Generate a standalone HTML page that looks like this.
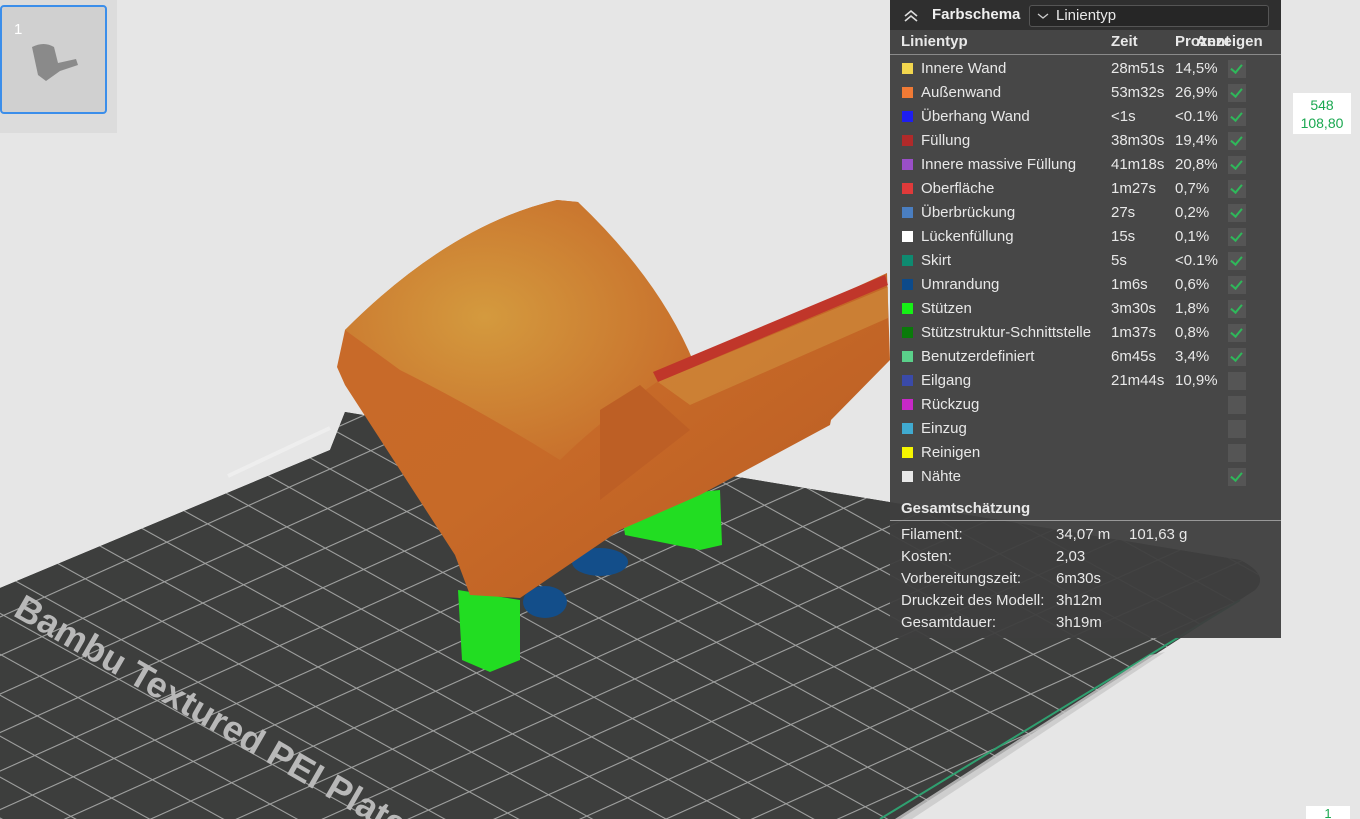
<!DOCTYPE html>
<html><head><meta charset="utf-8"><style>
*{margin:0;padding:0;box-sizing:border-box}
html,body{width:1360px;height:819px;overflow:hidden}
body{background:#e6e6e6;font-family:"Liberation Sans","Noto Sans CJK SC",sans-serif;position:relative}
svg.scene{position:absolute;left:0;top:0}
.thumbs{position:absolute;left:0;top:0;width:117px;height:133px;background:#dcdcdc}
.card{position:absolute;left:0;top:5px;width:107px;height:109px;border:2px solid #3b8eea;border-radius:4px;background:#d0d0d0}
.card span{position:absolute;left:12px;top:14px;color:#fff;font-size:15px}
.panel{position:absolute;left:890px;top:0;width:391px;height:638px;background:rgba(62,62,62,.95);color:#e8e8e8;font-size:15px;overflow:hidden}
.hdr{height:30px;background:#2f2f2f;position:relative}
.hdr b{position:absolute;left:42px;top:6px;font-size:15px;color:#f0f0f0}
.sel{position:absolute;left:139px;top:5px;width:240px;height:22px;border:1px solid #555;border-radius:3px;background:#262626;font-size:15px;padding-left:26px;line-height:20px}
.colh{height:25px;position:relative;border-bottom:1px solid #8a8a8a;font-weight:bold;background:#454545}
.colh span,.row span{position:absolute;top:3px}
.row{height:24px;position:relative}
.sw{position:absolute;left:12px;top:6px;width:11px;height:11px}
.chk{position:absolute;left:338px;top:3px;width:18px;height:18px;background:#555}
.chk.on::after{content:"";position:absolute;left:5px;top:2px;width:5px;height:9px;border:solid #2fb85a;border-width:0 2.5px 2.5px 0;transform:rotate(40deg)}
.est{position:absolute;left:0;top:498px;width:391px}
.est .t{font-weight:bold;padding-left:11px;height:23px;line-height:22px;border-bottom:1px solid #999}
.est .r{height:22px;position:relative}
.est .r span{position:absolute;top:3px}
</style></head><body>
<svg class="scene" width="1360" height="819">
<defs>
<pattern id="g" width="30" height="30" patternUnits="userSpaceOnUse" patternTransform="matrix(1.36,-0.61,1.28,0.71,0,0)">
<rect width="30" height="30" fill="#3d3e3d"/>
<path d="M0 0H30M0 0V30" stroke="#a0a1a0" stroke-width="1.8"/>
</pattern>
<clipPath id="pc"><path d="M345 412 L1240 560 Q1270 575 1255 590 L900 819 L0 819 L0 588 L330 450 Z"/></clipPath>
<linearGradient id="or" x1="0" y1="0" x2="1" y2="1"><stop offset="0" stop-color="#c96a2a"/><stop offset=".5" stop-color="#c76a28"/><stop offset="1" stop-color="#b85a22"/></linearGradient>
<radialGradient id="top" cx=".4" cy=".45" r=".6"><stop offset="0" stop-color="#d49a3e"/><stop offset="1" stop-color="#c8702c"/></radialGradient>
</defs>
<path d="M345 412 L1240 560 Q1270 575 1255 590 L900 819 L0 819 L0 588 L330 450 Z" fill="#2c2d2c"/>
<rect x="0" y="400" width="1300" height="419" fill="url(#g)" clip-path="url(#pc)"/>
<line x1="330" y1="428" x2="228" y2="476" stroke="#eee" stroke-width="4"/>
<text x="12" y="615" fill="#b8b8b8" font-size="36" transform="rotate(30 12 615)" font-family="Liberation Sans" font-weight="bold">Bambu Textured PEI Plate</text>
<line x1="1240" y1="600" x2="880" y2="819" stroke="#2fa070" stroke-width="2"/>
<polygon points="1150,655 1165,652 912,819 895,819" fill="#c8c8c8" opacity=".8"/>
<polygon points="458,590 520,600 520,660 490,672 462,660" fill="#22dd22"/>
<polygon points="620,500 720,490 722,545 700,550 650,540 625,535" fill="#22dd22"/>
<ellipse cx="545" cy="602" rx="22" ry="16" fill="#134e8a"/>
<ellipse cx="600" cy="562" rx="28" ry="14" fill="#134e8a"/>
<path d="M337 367 L345 330 Q450 225 557 200 L578 202 Q640 290 694 363 L653 380 L887 273 L890 360 L831 420 L830 425 L700 495 L620 530 L520 598 L470 595 L455 555 L345 385 Z" fill="url(#or)"/>
<path d="M345 330 Q450 225 557 200 L578 202 Q660 280 694 363 L660 380 Q600 420 560 460 Q480 410 400 370 Z" fill="url(#top)"/>
<path d="M653 372 L885 275 L888 285 L658 382 Z" fill="#c0362a"/>
<path d="M658 382 L888 287 L888 318 L690 405 Z" fill="#cf8a3a" opacity=".7"/>
<path d="M600 410 L640 385 L690 430 L600 500 Z" fill="#bd5f25"/>
</svg>
<div class="thumbs"><div class="card"><span>1</span>
<svg width="60" height="50" style="position:absolute;left:22px;top:30px"><path d="M8 10 Q20 4 30 10 L34 26 L52 22 L54 28 L36 34 L22 44 L14 38 Z" fill="#8a8a8a"/></svg></div></div>
<div class="panel">
<div class="hdr"><svg width="20" height="16" style="position:absolute;left:12px;top:7px"><path d="M3 9l6-5 6 5M3 14l6-5 6 5" fill="none" stroke="#ddd" stroke-width="1.6"/></svg><b>Farbschema</b><div class="sel"><svg width="14" height="8" style="position:absolute;left:7px;top:7px"><path d="M1 1l5 4 5-4" fill="none" stroke="#ccc" stroke-width="1.3"/></svg>Linientyp</div></div>
<div class="colh"><span style="left:11px">Linientyp</span><span style="left:221px">Zeit</span><span style="left:285px">Prozent</span><span style="left:306px">Anzeigen</span></div>
<div style="height:2px"></div>
<div id="rows"></div>
<div class="est"><div class="t">Gesamtschätzung</div><div style="height:2px"></div>
<div class="r"><span style="left:11px">Filament:</span><span style="left:166px">34,07 m</span><span style="left:239px">101,63 g</span></div>
<div class="r"><span style="left:11px">Kosten:</span><span style="left:166px">2,03</span></div>
<div class="r"><span style="left:11px">Vorbereitungszeit:</span><span style="left:166px">6m30s</span></div>
<div class="r"><span style="left:11px">Druckzeit des Modell:</span><span style="left:166px">3h12m</span></div>
<div class="r"><span style="left:11px">Gesamtdauer:</span><span style="left:166px">3h19m</span></div>
</div>
</div>
<div style="position:absolute;left:1293px;top:93px;width:58px;height:41px;background:#fff;color:#1aa850;font-size:14px;text-align:center;line-height:18px;padding-top:3px">548<br>108,80</div>
<div style="position:absolute;left:1306px;top:806px;width:44px;height:13px;background:#fff;color:#1aa850;font-size:13px;text-align:center;line-height:16px;overflow:hidden">1</div>
<script>
var d=[["#f2d64e","Innere Wand","28m51s","14,5%",1],["#f07a35","Außenwand","53m32s","26,9%",1],["#1e1ef0","Überhang Wand","<1s","<0.1%",1],["#b02a2a","Füllung","38m30s","19,4%",1],["#9a4fc8","Innere massive Füllung","41m18s","20,8%",1],["#e03a3a","Oberfläche","1m27s","0,7%",1],["#4a7ec0","Überbrückung","27s","0,2%",1],["#ffffff","Lückenfüllung","15s","0,1%",1],["#0e8a70","Skirt","5s","<0.1%",1],["#0c4a8a","Umrandung","1m6s","0,6%",1],["#16f016","Stützen","3m30s","1,8%",1],["#0a7a0a","Stützstruktur-Schnittstelle","1m37s","0,8%",1],["#5ad08a","Benutzerdefiniert","6m45s","3,4%",1],["#3a4aa8","Eilgang","21m44s","10,9%",0],["#c828c8","Rückzug","","",0],["#40aad0","Einzug","","",0],["#f5f500","Reinigen","","",0],["#e8e8e8","Nähte","","",1]];
var h="";d.forEach(function(r){h+='<div class="row"><div class="sw" style="background:'+r[0]+'"></div><span style="left:31px">'+r[1]+'</span><span style="left:221px">'+r[2].replace("<","&lt;")+'</span><span style="left:285px">'+r[3].replace("<","&lt;")+'</span><div class="chk'+(r[4]?' on':'')+'"></div></div>'});
document.getElementById("rows").innerHTML=h;
</script>
</body></html>
